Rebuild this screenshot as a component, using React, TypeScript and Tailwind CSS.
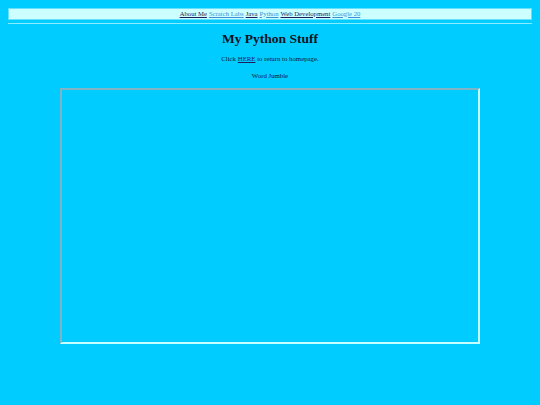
import React from 'react';

const navLinks = [
  { label: 'About Me', visited: true },
  { label: 'Scratch Labs', visited: false },
  { label: 'Java', visited: true },
  { label: 'Python', visited: false },
  { label: 'Web Development', visited: true },
  { label: 'Google 20', visited: false },
];

export default function App() {
  return (
    <div className="min-h-[405px] w-[540px] bg-[#00ccff] px-[8px] pt-[8px] text-[#111133] [font-family:'Liberation_Serif',serif]">
      {/* Nav bar */}
      <div className="flex h-[12px] items-center justify-center gap-[2px] border border-[#66e0ff] bg-[#ccffff] text-[6.7px] leading-none">
        {navLinks.map((link) => (
          <a
            key={link.label}
            href="#"
            className={`underline ${link.visited ? 'text-[#1c1c5c]' : 'text-[#3f8fd8]'}`}
          >
            {link.label}
          </a>
        ))}
      </div>
      <div className="mt-[3px] h-[1px] bg-[#88eeff]" />

      {/* Content */}
      <div className="flex flex-col items-center">
        <h1 className="mt-[7px] text-[13.5px] font-bold leading-[16px] text-[#111122]">My Python Stuff</h1>
        <p className="mt-[7px] text-[6.8px] leading-[9px]">
          Click <a href="#" className="text-[#1c1c5c] underline">HERE</a> to return to homepage.
        </p>
        <p className="mt-[8px] text-[6.8px] leading-[9px]">Word Jumble</p>
        <div className="mt-[8px] h-[256px] w-[420px] border-2 border-t-[#7fb3c6] border-l-[#7fb3c6] border-b-[#c6ffff] border-r-[#c6ffff] bg-[#00ccff]" />
      </div>
    </div>
  );
}
